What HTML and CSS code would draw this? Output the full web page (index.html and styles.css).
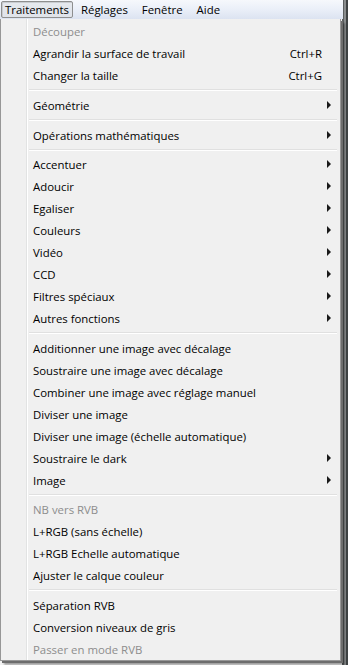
FILE: index.html
```html
<!DOCTYPE html>
<html lang="fr">
<head>
<meta charset="utf-8">
<link rel="stylesheet" href="styles.css">
</head>
<body>
<div class="screen">
  <div class="menubar">
    <span class="mb-item active">Traitements</span>
    <span class="mb-item">Réglages</span>
    <span class="mb-item">Fenêtre</span>
    <span class="mb-item">Aide</span>
  </div>
  <div class="menu">
    <div class="item disabled"><span class="label">Découper</span></div>
    <div class="item"><span class="label">Agrandir la surface de travail</span><span class="key">Ctrl+R</span></div>
    <div class="item"><span class="label">Changer la taille</span><span class="key">Ctrl+G</span></div>
    <div class="sep"></div>
    <div class="item sub"><span class="label">Géométrie</span></div>
    <div class="sep"></div>
    <div class="item sub"><span class="label">Opérations mathématiques</span></div>
    <div class="sep narrow"></div>
    <div class="item sub"><span class="label">Accentuer</span></div>
    <div class="item sub"><span class="label">Adoucir</span></div>
    <div class="item sub"><span class="label">Egaliser</span></div>
    <div class="item sub"><span class="label">Couleurs</span></div>
    <div class="item sub"><span class="label">Vidéo</span></div>
    <div class="item sub"><span class="label">CCD</span></div>
    <div class="item sub"><span class="label">Filtres spéciaux</span></div>
    <div class="item sub"><span class="label">Autres fonctions</span></div>
    <div class="sep"></div>
    <div class="item"><span class="label">Additionner une image avec décalage</span></div>
    <div class="item"><span class="label">Soustraire une image avec décalage</span></div>
    <div class="item"><span class="label">Combiner une image avec réglage manuel</span></div>
    <div class="item"><span class="label">Diviser une image</span></div>
    <div class="item"><span class="label">Diviser une image (échelle automatique)</span></div>
    <div class="item sub"><span class="label">Soustraire le dark</span></div>
    <div class="item sub"><span class="label">Image</span></div>
    <div class="sep narrow"></div>
    <div class="item disabled"><span class="label">NB vers RVB</span></div>
    <div class="item"><span class="label">L+RGB (sans échelle)</span></div>
    <div class="item"><span class="label">L+RGB Echelle automatique</span></div>
    <div class="item"><span class="label">Ajuster le calque couleur</span></div>
    <div class="sep"></div>
    <div class="item"><span class="label">Séparation RVB</span></div>
    <div class="item"><span class="label">Conversion niveaux de gris</span></div>
    <div class="item disabled"><span class="label">Passer en mode RVB</span></div>
  </div>
</div>
</body>
</html>
```
FILE: styles.css
```css
html, body {
  margin: 0;
  padding: 0;
}
body {
  width: 348px;
  height: 665px;
  overflow: hidden;
  background: #e9ecef;
  font-family: "Open Sans", "Noto Sans", sans-serif;
  font-size: 11.4px;
  color: #000;
}
.screen {
  width: 348px;
  height: 665px;
  background: linear-gradient(to right, #f3f3f3 0 342px, #5b5f60 342px 344px, #8a8d8e 344px 346px, #3e4243 346px);
}
.menubar {
  height: 19px;
  width: 343px;
  display: flex;
  align-items: center;
  background: linear-gradient(to bottom, #f6f8fc 0%, #eaeff8 50%, #dce3f1 100%);
  box-sizing: border-box;
  padding-left: 1px;
}
.mb-item {
  height: 17px;
  line-height: 16px;
  padding: 0 6px;
  box-sizing: border-box;
  border: 1px solid transparent;
}
.mb-item.active {
  border-color: #8e8f8f;
  border-radius: 2px;
  background: linear-gradient(to bottom, #e6e9ee, #dfe3ea);
  box-shadow: inset 1px 1px 0 #c9ccd1;
  padding: 0 3px;
  margin-right: 1px;
  width: 72px;
}
.menu {
  width: 341px;
  box-sizing: border-box;
  border: 1px solid #979797;
  border-top: none;
  padding: 1px 0 0 0;
  background: linear-gradient(to right, #f0f0f0 0 25px, #e2e3e3 25px 26px, #ffffff 26px 27px, #f0f0f0 27px);
  box-shadow: 2px 2px 0 #6d6d6d, 4px 4px 2px rgba(0, 0, 0, 0.35);
}
.item {
  height: 22px;
  display: flex;
  align-items: center;
  padding-left: 32px;
  padding-right: 18px;
}
.label {
  flex: 1;
  white-space: nowrap;
}
.key {
  white-space: nowrap;
}
.disabled {
  color: #8d8d8d;
}
.sub {
  position: relative;
}
.sub::after {
  content: "";
  position: absolute;
  right: 9px;
  top: 7px;
  border-left: 4px solid #1a1a1a;
  border-top: 4px solid transparent;
  border-bottom: 4px solid transparent;
}
.sep {
  height: 8px;
  margin-left: 28px;
  margin-right: 3px;
  box-sizing: border-box;
  padding-top: 3px;
}
.sep.narrow {
  height: 7px;
}
.sep::before {
  content: "";
  display: block;
  height: 1px;
  background: #e0e0e0;
  border-bottom: 1px solid #ffffff;
}
```
